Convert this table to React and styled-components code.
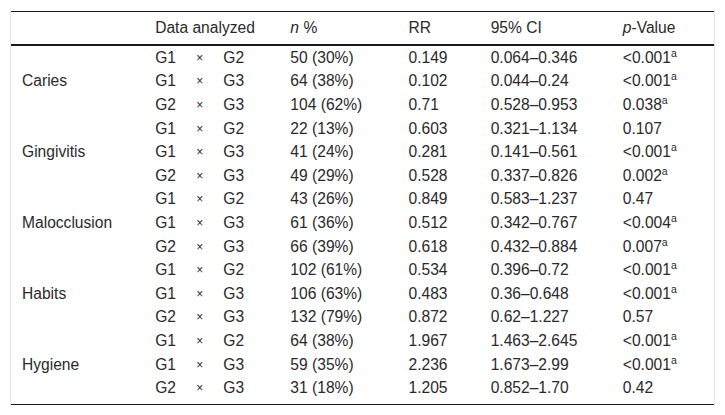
import React from "react";
import styled, { createGlobalStyle } from "styled-components";

const Global = createGlobalStyle`
  html, body { margin: 0; padding: 0; background: #fff; }
  body { font-family: "Liberation Sans", Arial, sans-serif; color: #2a2a2a; }
`;

const Frame = styled.div`
  margin: 10px;
  padding-top: 1px;
  border-left: 1px solid #e6e6e6;
  border-right: 1px solid #e6e6e6;
`;

const Inner = styled.div`
  border-top: 1px solid #1a1a1a;
  border-bottom: 1px solid #1a1a1a;
  padding-bottom: 4px;
`;

const Table = styled.table`
  width: 100%;
  border-collapse: collapse;
  table-layout: fixed;
  font-size: 15.6px;
  line-height: 18px;
`;

const Th = styled.th`
  height: 32px;
  padding: 0 0 0 11px;
  text-align: left;
  font-weight: normal;
  vertical-align: middle;
  border-bottom: 2px solid #1a1a1a;
  white-space: nowrap;
`;

const Td = styled.td`
  height: 23.6px;
  padding: 0 0 0 11px;
  vertical-align: middle;
  white-space: nowrap;
`;

const Times = styled(Td)`
  font-size: 12px;
`;

const Sup = styled.sup`
  font-size: 10.5px;
  line-height: 0;
  vertical-align: 6.5px;
`;

const groups = [
  {
    name: "Caries",
    rows: [
      ["G1", "G2", "50 (30%)", "0.149", "0.064–0.346", "<0.001", true],
      ["G1", "G3", "64 (38%)", "0.102", "0.044–0.24", "<0.001", true],
      ["G2", "G3", "104 (62%)", "0.71", "0.528–0.953", "0.038", true],
    ],
  },
  {
    name: "Gingivitis",
    rows: [
      ["G1", "G2", "22 (13%)", "0.603", "0.321–1.134", "0.107", false],
      ["G1", "G3", "41 (24%)", "0.281", "0.141–0.561", "<0.001", true],
      ["G2", "G3", "49 (29%)", "0.528", "0.337–0.826", "0.002", true],
    ],
  },
  {
    name: "Malocclusion",
    rows: [
      ["G1", "G2", "43 (26%)", "0.849", "0.583–1.237", "0.47", false],
      ["G1", "G3", "61 (36%)", "0.512", "0.342–0.767", "<0.004", true],
      ["G2", "G3", "66 (39%)", "0.618", "0.432–0.884", "0.007", true],
    ],
  },
  {
    name: "Habits",
    rows: [
      ["G1", "G2", "102 (61%)", "0.534", "0.396–0.72", "<0.001", true],
      ["G1", "G3", "106 (63%)", "0.483", "0.36–0.648", "<0.001", true],
      ["G2", "G3", "132 (79%)", "0.872", "0.62–1.227", "0.57", false],
    ],
  },
  {
    name: "Hygiene",
    rows: [
      ["G1", "G2", "64 (38%)", "1.967", "1.463–2.645", "<0.001", true],
      ["G1", "G3", "59 (35%)", "2.236", "1.673–2.99", "<0.001", true],
      ["G2", "G3", "31 (18%)", "1.205", "0.852–1.70", "0.42", false],
    ],
  },
];

const widths = [133, 41, 27, 67, 118, 82, 132, 102];

export default function App() {
  return (
    <>
      <Global />
      <Frame>
        <Inner>
          <Table>
            <colgroup>
              {widths.map((w, i) => (
                <col key={i} style={{ width: w }} />
              ))}
            </colgroup>
            <thead>
              <tr>
                <Th />
                <Th colSpan={3}>Data analyzed</Th>
                <Th>
                  <i>n</i> %
                </Th>
                <Th>RR</Th>
                <Th>95% CI</Th>
                <Th>
                  <i>p</i>-Value
                </Th>
              </tr>
            </thead>
            <tbody>
              {groups.map((g) =>
                g.rows.map((r, i) => (
                  <tr key={g.name + i}>
                    {i === 0 && <Td rowSpan={3}>{g.name}</Td>}
                    <Td>{r[0]}</Td>
                    <Times>×</Times>
                    <Td>{r[1]}</Td>
                    <Td>{r[2]}</Td>
                    <Td>{r[3]}</Td>
                    <Td>{r[4]}</Td>
                    <Td>
                      {r[5]}
                      {r[6] && <Sup>a</Sup>}
                    </Td>
                  </tr>
                ))
              )}
            </tbody>
          </Table>
        </Inner>
      </Frame>
    </>
  );
}
